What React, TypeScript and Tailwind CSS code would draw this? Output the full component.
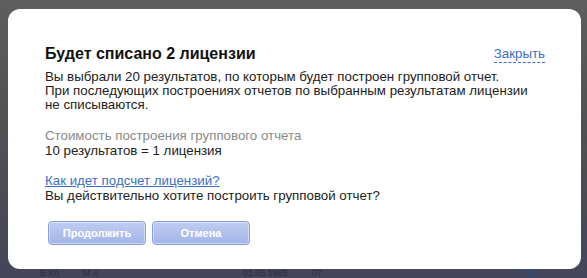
import React from "react";

export default function App() {
  return (
    <div
      className="relative w-[587px] h-[278px] overflow-hidden bg-gradient-to-b from-[#5e5e5e] via-[#505054] to-[#44455a]"
      style={{ fontFamily: '"Liberation Sans", Arial, sans-serif' }}
    >
      {/* faint background page */}
      <div className="absolute left-0 right-0 bottom-0 h-[9px] flex items-end gap-6 px-10 text-[9px] leading-[9px] text-[#2a2c3e]">
        <span>Б Кб</span>
        <span>М А</span>
        <span className="ml-[120px]">01.05.1985</span>
        <span>07</span>
        <span className="ml-auto mr-[8px] text-[#2f4a8a]">ПРБ</span>
      </div>
      <div className="absolute left-[8px] top-[9px] w-[573px] h-[260px] bg-white rounded-[12px] pl-[37px] pr-[36px] pt-[35px]">
        <div className="flex items-start justify-between">
          <h1 className="text-[16px] leading-[20px] font-bold text-[#111]">
            Будет списано 2 лицензии
          </h1>
          <a className="text-[13.3px] leading-[16px] text-[#3b6fc4] border-b border-dashed border-[#3b6fc4] mt-[2px] cursor-pointer">
            Закрыть
          </a>
        </div>
        <div className="mt-[6px] text-[13.3px] leading-[14px] text-[#222]">
          <p>Вы выбрали 20 результатов, по которым будет построен групповой отчет.</p>
          <p>При последующих построениях отчетов по выбранным результатам лицензии</p>
          <p>не списываются.</p>
        </div>
        <div className="mt-[16px] text-[13.3px] leading-[15px]">
          <p className="text-[#8a8a8a]">Стоимость построения группового отчета</p>
          <p className="text-[#222]">10 результатов = 1 лицензия</p>
        </div>
        <div className="mt-[15px] text-[13.3px] leading-[15px]">
          <a className="text-[#3b6fc4] underline cursor-pointer">Как идет подсчет лицензий?</a>
          <p className="text-[#222]">Вы действительно хотите построить групповой отчет?</p>
        </div>
        <div className="mt-[18px] ml-[3px] flex gap-[6px]">
          <button className="w-[98px] h-[24px] rounded-[4px] border border-[#889fdb] bg-gradient-to-b from-[#bfcdf1] to-[#a2b5e8] text-white text-[11px] font-bold shadow-[inset_0_0_0_1px_rgba(255,255,255,0.45)]">
            Продолжить
          </button>
          <button className="w-[98px] h-[24px] rounded-[4px] border border-[#889fdb] bg-gradient-to-b from-[#bfcdf1] to-[#a2b5e8] text-white text-[11px] font-bold shadow-[inset_0_0_0_1px_rgba(255,255,255,0.45)]">
            Отмена
          </button>
        </div>
      </div>
    </div>
  );
}
